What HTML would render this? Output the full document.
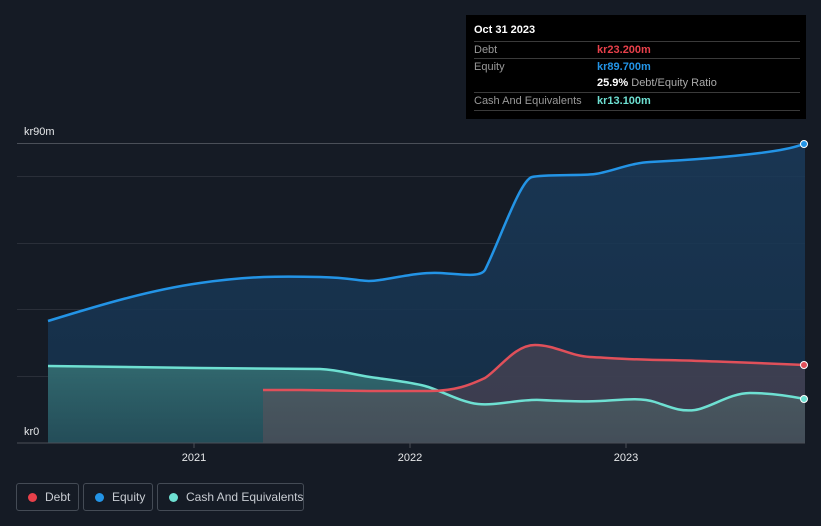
<!DOCTYPE html>
<html><head><style>
html,body{margin:0;width:821px;height:526px;overflow:hidden}
body{background:#151b25;font-family:"Liberation Sans",sans-serif;position:relative}
.tt{position:absolute;left:466px;top:15px;width:340px;height:104px;background:#000;color:#fff;font-size:11px}
.row{position:absolute;left:8px;right:6px;height:17px;border-top:1px solid #3a3a3a;line-height:17px}
.row span.l{color:#999;position:absolute;left:0}
.row span.v{position:absolute;left:123px;font-weight:bold;white-space:nowrap}
.leg{position:absolute;top:483px;height:28px;border:1px solid #444b55;border-radius:3px;color:#c8ccd2;font-size:12px;line-height:27px;box-sizing:border-box;white-space:nowrap}
.leg i{position:absolute;left:11px;top:9px;width:9px;height:9px;border-radius:50%}
</style></head><body>
<svg width="821" height="526" style="position:absolute;left:0;top:0">
<defs>
<linearGradient id="eq" x1="0" y1="0" x2="0" y2="1"><stop offset="0" stop-color="#1a3a5a" stop-opacity=".85"/><stop offset="1" stop-color="#15304a" stop-opacity=".9"/></linearGradient>
<linearGradient id="ca" x1="0" y1="0" x2="0" y2="1"><stop offset="0" stop-color="#3a7a7a" stop-opacity=".75"/><stop offset="1" stop-color="#2a5a60" stop-opacity=".7"/></linearGradient>
</defs>
<g stroke="#2a2f39" stroke-width="1">
<line x1="17" x2="805" y1="143.5" y2="143.5" stroke="#4a4f58"/>
<line x1="17" x2="805" y1="176.5" y2="176.5"/>
<line x1="17" x2="805" y1="243.5" y2="243.5"/>
<line x1="17" x2="805" y1="309.5" y2="309.5"/>
<line x1="17" x2="805" y1="376.5" y2="376.5"/>
</g>
<path d="M48,321 C100,305 150,290 200,283 S280,276 320,277 S360,283 380,280 S420,272 440,273 S480,278 485,270 C500,240 520,180 532,177 S580,176 595,174 S630,163 650,162 S720,158 760,153 S800,144 805,144 L805,443 L48,443Z" fill="url(#eq)"/>
<path d="M48,366 L200,368 L320,369 C340,370 350,374 370,377 S410,382 425,386 S460,402 478,404 S520,399 540,400 S580,402 600,401 S640,397 655,402 S680,412 695,410 S730,393 750,393 S790,396 805,399 L805,443 L48,443Z" fill="url(#ca)"/>
<path d="M263,390 L300,390 L370,391 L430,391 C455,391 470,385 485,378 C500,368 515,345 535,345 S570,356 590,357 S640,360 660,360 S760,363 805,365 L805,443 L263,443Z" fill="#6a5058" fill-opacity=".45"/>
<path d="M48,321 C100,305 150,290 200,283 S280,276 320,277 S360,283 380,280 S420,272 440,273 S480,278 485,270 C500,240 520,180 532,177 S580,176 595,174 S630,163 650,162 S720,158 760,153 S800,144 805,144" fill="none" stroke="#2394e6" stroke-width="2.5"/>
<path d="M48,366 L200,368 L320,369 C340,370 350,374 370,377 S410,382 425,386 S460,402 478,404 S520,399 540,400 S580,402 600,401 S640,397 655,402 S680,412 695,410 S730,393 750,393 S790,396 805,399" fill="none" stroke="#6ee0d2" stroke-width="2.5"/>
<path d="M263,390 L300,390 L370,391 L430,391 C455,391 470,385 485,378 C500,368 515,345 535,345 S570,356 590,357 S640,360 660,360 S760,363 805,365" fill="none" stroke="#e0505a" stroke-width="2.5"/>
<line x1="17" x2="805" y1="443" y2="443" stroke="#4a4f58"/>
<line x1="194" x2="194" y1="443" y2="448" stroke="#4a4f58"/>
<line x1="410" x2="410" y1="443" y2="448" stroke="#4a4f58"/>
<line x1="626" x2="626" y1="443" y2="448" stroke="#4a4f58"/>
<circle cx="804" cy="144" r="3.5" fill="#2394e6" stroke="#fff" stroke-width="1"/>
<circle cx="804" cy="365" r="3.5" fill="#e0505a" stroke="#fff" stroke-width="1"/>
<circle cx="804" cy="399" r="3.5" fill="#6ee0d2" stroke="#fff" stroke-width="1"/>
<g font-family="Liberation Sans" font-size="11" fill="#e6e8ea">
<text x="24" y="135">kr90m</text>
<text x="24" y="435">kr0</text>
<text x="194" y="461" text-anchor="middle">2021</text>
<text x="410" y="461" text-anchor="middle">2022</text>
<text x="626" y="461" text-anchor="middle">2023</text>
</g>
</svg>
<div class="tt">
<div style="position:absolute;left:8px;top:9px;font-weight:bold;font-size:11px">Oct 31 2023</div>
<div class="row" style="top:26px"><span class="l">Debt</span><span class="v" style="color:#e8404a">kr23.200m</span></div>
<div class="row" style="top:43px"><span class="l">Equity</span><span class="v" style="color:#2394e6">kr89.700m</span></div>
<div class="row" style="top:60px;border-top:none"><span class="v" style="color:#fff">25.9% <span style="color:#aaa;font-weight:normal">Debt/Equity Ratio</span></span></div>
<div class="row" style="top:77px"><span class="l">Cash And Equivalents</span><span class="v" style="color:#6ee0d2">kr13.100m</span></div>
<div class="row" style="top:95px;height:0"></div>
</div>
<div class="leg" style="left:16px;width:63px"><i style="background:#e8404a"></i><span style="position:absolute;left:28px">Debt</span></div>
<div class="leg" style="left:83px;width:70px"><i style="background:#2394e6"></i><span style="position:absolute;left:28px">Equity</span></div>
<div class="leg" style="left:157px;width:147px"><i style="background:#6ee0d2"></i><span style="position:absolute;left:28px">Cash And Equivalents</span></div>
</body></html>
